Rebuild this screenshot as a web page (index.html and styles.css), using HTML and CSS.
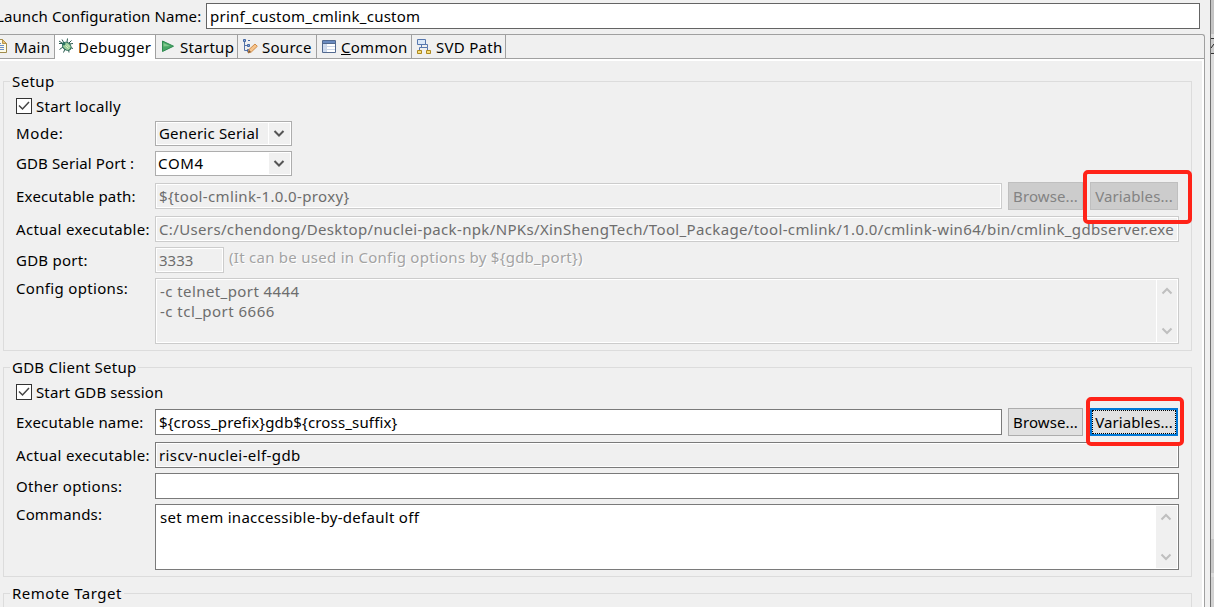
FILE: index.html
```
<!DOCTYPE html>
<html lang="en">
<head>
<meta charset="utf-8">
<title>Launch Configuration</title>
<link rel="stylesheet" href="styles.css">
</head>
<body>
<div class="screen">
  <main class="window">
    <div class="name-row">
      <span class="name-label">Launch Configuration Name:</span>
      <div class="field name-field"><span class="t-name">prinf_custom_cmlink_custom</span></div>
    </div>
    <div class="folder">
      <nav class="tabs">
        <div class="tab tab-main">
          <svg width="16" height="16" viewBox="0 0 16 16"><path d="M2.500 1.500h8l4 4v9h-12z" fill="#fdfbe8" stroke="#a08c4c"/><path d="M10.500 1.500v4h4z" fill="#e8c474" stroke="#b8954c"/><path d="M3 5.500h6M3 7.500h9M3 9.500h9M3 11.500h9" stroke="#6b8fc9"/></svg>
          <span>Main</span>
        </div>
        <div class="tab tab-debugger selected">
          <svg width="16" height="16" viewBox="0 0 16 16"><path d="M4 1.500 6 5M9.500 .5 9 4M1 5.500h4M1.500 11.500 5 9M5.500 14.500 7 11M11 14.500 10.500 11M15 10.500 11 9M15 5.500 11 6M1 3l3 2M13.500 2.500 11 5" stroke="#2b5c50" fill="none"/><ellipse cx="8.800" cy="8.300" rx="4.600" ry="3.600" transform="rotate(38 8.800 8.300)" fill="#9ccf9c" stroke="#1f6250"/><path d="M7.500 7.500l3 3M9 6.500l2.500 2.500" stroke="#dcf0c0"/><circle cx="5.800" cy="5.800" r="1.700" fill="#2d7462"/></svg>
          <span>Debugger</span>
        </div>
        <div class="tab tab-startup">
          <svg width="16" height="16" viewBox="0 0 16 16"><path d="M2.500 3v10.500L13.500 8.200z" fill="#49a866" stroke="#2f8a50" stroke-linejoin="round"/><path d="M3.500 5v3.500L10 8z" fill="#82c98d"/></svg>
          <span>Startup</span>
        </div>
        <div class="tab tab-source">
          <svg width="16" height="16" viewBox="0 0 16 16"><path d="M2.500 4v8.500h3M2.500 7.500h3" stroke="#5674a8" fill="none"/><path d="M1.500 1.500h2v2h-2zM5.500 6.500h2v2h-2zM5.500 11.500h2v2h-2zM6 2.500h2" fill="#8eabd8" stroke="#4468a5"/><path d="M6 15l1-3.500 6-5.500 2.300 2.300-6 5.700z" fill="#f6c48c" stroke="#d08c48"/><path d="M6 15l1-3 2 2z" fill="#7a583b"/></svg>
          <span>Source</span>
        </div>
        <div class="tab tab-common">
          <svg width="16" height="16" viewBox="0 0 16 16"><path d="M1.500 2.500h13v12h-13z" fill="#fff" stroke="#52698f"/><path d="M2 3h12v2H2z" fill="#6a8bc0"/><path d="M2 6h3.500v8H2z" fill="#cfdcf0"/><path d="M5.500 6v8M2 8.500h12M2 11.500h12" stroke="#cbd6e8"/><path d="M1 5.500h14" stroke="#52698f"/></svg>
          <span><u>C</u>ommon</span>
        </div>
        <div class="tab tab-svd">
          <svg width="16" height="16" viewBox="0 0 16 16"><path d="M5.500 7v2.500M3.500 12V9.500h8V12M9 6.500h2.500v3" stroke="#5878ae" fill="none"/><path d="M1.500 1.500h8v5h-8z" fill="#dbe8f8" stroke="#5878ae"/><path d="M1.500 12.500h4v3h-4zM10.500 12.500h4v3h-4z" fill="#f7df7c" stroke="#ad8820"/></svg>
          <span>SVD Path</span>
        </div>
      </nav>
      <div class="page">
        <fieldset class="group">
          <legend class="t-setup">Setup</legend>
          <div class="check-row"><span class="checkbox"><svg width="14" height="14" viewBox="0 0 14 14"><path d="M2 6.500 5.500 10 12 3"/></svg></span><span class="t-local">Start locally</span></div>
          <div class="row combo-row"><label class="t-mode">Mode:</label><div class="combo readonly"><span class="t-generic">Generic Serial</span><i class="drop"><svg width="12" height="8" viewBox="0 0 12 8"><path d="M1.500 1 6 5.500 10.500 1"/></svg></i></div></div>
          <div class="row combo-row second"><label class="t-serial">GDB Serial Port :</label><div class="combo editable"><span class="t-com">COM4</span><i class="drop"><svg width="12" height="8" viewBox="0 0 12 8"><path d="M1.500 1 6 5.500 10.500 1"/></svg></i></div></div>
          <div class="row path-row"><label class="t-epath">Executable path:</label><div class="field disabled"><span class="t-tool">${tool-cmlink-1.0.0-proxy}</span></div><div class="button browse off">Browse...</div><div class="button variables off">Variables...<b class="mark mark-top"></b></div></div>
          <div class="row actual-row"><label class="t-actual">Actual executable:</label><div class="field disabled"><span class="t-long">C:/Users/chendong/Desktop/nuclei-pack-npk/NPKs/XinShengTech/Tool_Package/tool-cmlink/1.0.0/cmlink-win64/bin/cmlink_gdbserver.exe</span></div></div>
          <div class="row next-row"><label class="t-port">GDB port:</label><div class="field disabled port"><span class="t-3333">3333</span></div><span class="hint">(It can be used in Config options by ${gdb_port})</span></div>
          <div class="row area-row"><label class="t-config">Config options:</label><div class="area disabled"><div class="lines"><span class="t-telnet">-c telnet_port 4444</span><br><span class="t-tcl">-c tcl_port 6666</span></div><div class="scroll"><svg width="12" height="8" viewBox="0 0 12 8"><path d="M1.500 6.500 6 2 10.500 6.500"/></svg><svg width="12" height="8" viewBox="0 0 12 8"><path d="M1.500 1.500 6 6 10.500 1.500"/></svg></div></div></div>
        </fieldset>
        <fieldset class="group">
          <legend class="t-client">GDB Client Setup</legend>
          <div class="check-row"><span class="checkbox"><svg width="14" height="14" viewBox="0 0 14 14"><path d="M2 6.500 5.500 10 12 3"/></svg></span><span class="t-session">Start GDB session</span></div>
          <div class="row path-row"><label class="t-ename">Executable name:</label><div class="field"><span class="t-cross">${cross_prefix}gdb${cross_suffix}</span></div><div class="button browse">Browse...</div><div class="button variables focused">Variables...<b class="mark mark-bottom"></b></div></div>
          <div class="row actual-row"><label class="t-actual">Actual executable:</label><div class="field readonly"><span class="t-riscv">riscv-nuclei-elf-gdb</span></div></div>
          <div class="row next-row"><label class="t-other">Other options:</label><div class="field"></div></div>
          <div class="row area-row"><label class="t-commands">Commands:</label><div class="area"><div class="lines"><span class="t-mem">set mem inaccessible-by-default off</span></div><div class="scroll"><svg width="12" height="8" viewBox="0 0 12 8"><path d="M1.500 6.500 6 2 10.500 6.500"/></svg><svg width="12" height="8" viewBox="0 0 12 8"><path d="M1.500 1.500 6 6 10.500 1.500"/></svg></div></div></div>
        </fieldset>
        <fieldset class="group">
          <legend class="t-remote">Remote Target</legend>
          <div class="filler"></div>
        </fieldset>
      </div>
    </div>
  </main>
  <aside class="behind"><div class="bar"></div><div class="tool"><svg width="3" height="14" viewBox="0 0 3 14"><path d="M0 9 3 5" stroke="#222"/></svg></div><div class="blank"></div><div class="bar low"></div></aside>
</div>
</body>
</html>
```
FILE: styles.css
```
* { box-sizing: border-box; }
body { margin: 0; font: 15px/20px "Noto Sans", "Open Sans", sans-serif; color: #000; background: #f0f0f0; overflow: hidden; }
.screen { display: flex; width: 1214px; height: 607px; overflow: hidden; }
.window { width: 1211px; flex: none; background: #f0f0f0; border-right: 1px solid #707070; }
.name-row { display: flex; height: 34px; padding-top: 3px; }
.name-label { flex: none; width: 210px; margin: 3px 0 0 -4px; letter-spacing: .1px; white-space: nowrap; }
.folder { width: 1205px; height: 573px; border: solid #a0a0a0; border-width: 1px 1px 0 0; border-top-right-radius: 3px; }
.tabs { display: flex; height: 24px; border-bottom: 1px solid #a0a0a0; }
.tab { display: flex; align-items: center; height: 23px; border-right: 1px solid #a0a0a0; white-space: nowrap; letter-spacing: .28px; }
.tab svg { flex: none; margin-top: -1px; }
.tab span { margin-left: 4px; }
.tab-main { width: 55px; }
.tab-main svg { margin-left: -8px; }
.tab-main span { margin-left: 6px; }
.tab-debugger { width: 101px; padding-left: 3px; }
.tab-startup { width: 82px; padding-left: 4px; }
.tab-source { width: 79px; padding-left: 4px; }
.tab-common { width: 95px; padding-left: 4px; }
.tab-svd { width: 94px; padding-left: 4px; }
.selected { background: #fff; height: 24px; padding-bottom: 1px; }
.page { height: 548px; border: solid #fff; border-width: 2px 2px 0 0; padding: 10px 0 0 3px; overflow: hidden; }
.group { margin: 0 0 6px; width: 1189px; padding: 0 0 6px 12px; border: 1px solid #dcdcdc; min-width: 0; }
legend { height: 20px; padding: 0 2px; margin-left: -6px; white-space: nowrap; }
.check-row { display: flex; align-items: center; height: 20px; margin-top: 5px; }
.checkbox { display: flex; width: 16px; height: 16px; margin-right: 4px; background: #fff; border: 1px solid #333; }
.checkbox path { fill: none; stroke: #444; stroke-width: 1.5; }
.row { display: flex; white-space: nowrap; }
.row > label { width: 139px; flex: none; padding-top: 3px; }
.combo-row { margin-top: 5px; }
.combo-row > label { padding-top: 2px; }
.path-row { margin-top: 6px; height: 28px; }
.path-row > label { padding-top: 4px; }
.path-row > .field { flex: none; width: 847px; margin-top: 1px; }
.actual-row { margin-top: 6px; }
.next-row { margin-top: 5px; }
.area-row { margin-top: 5px; }
.area-row > label { padding-top: 0; }
.field { width: 1024px; height: 26px; padding: 2px 0 0 3px; background: #fff; border: 1px solid #7a7a7a; line-height: 20px; white-space: nowrap; }
.readonly, .disabled { background: #f0f0f0; box-shadow: inset 0 0 0 1px #fff; }
.disabled { color: #6d6d6d; border-color: #ccc; }
.name-field { flex: none; width: 994px; border-color: #646464; }
.port { width: 69px; }
.hint { margin-left: 5px; color: #a3a3a3; text-shadow: 1px 1px #fff; letter-spacing: .27px; }
.combo { display: flex; width: 137px; height: 25px; padding: 1px 1px 1px 3px; background: #fff; border: 1px solid #adadad; }
.combo.readonly { background: #f0f0f0; }
.editable { padding-left: 2px; }
.drop { display: flex; align-items: center; justify-content: center; width: 22px; height: 21px; padding-right: 1px; margin-left: auto; background: #f0f0f0; border-left: 1px solid #fff; }
.drop path { fill: none; stroke: #555; stroke-width: 2; }
.button { position: relative; height: 28px; padding-top: 3px; text-align: center; background: #e1e1e1; border: 1px solid #adadad; }
.browse { width: 75px; margin-left: 6px; letter-spacing: .1px; }
.variables { width: 88px; margin-left: 7px; letter-spacing: .1px; }
.off { color: #838383; background: #ccc; border-color: #bfbfbf; }
.focused { padding-top: 2px; border: 2px solid #0078d7; outline: 1px dotted #000; outline-offset: -3px; }
.mark { position: absolute; border: 4px solid #ff2318; border-radius: 5px; }
.mark-top { left: -8px; top: -13px; width: 109px; height: 54px; }
.mark-bottom { left: -6px; top: -13px; width: 98px; height: 49px; }
.area { display: flex; justify-content: space-between; width: 1024px; height: 66px; padding: 2px 1px 1px 4px; background: #fff; border: 1px solid #7a7a7a; }
.area.disabled { background: #f0f0f0; border-color: #ccc; }
.scroll { display: flex; flex-direction: column; justify-content: space-between; align-items: center; width: 21px; height: 62px; margin-top: -1px; padding: 7px 1px 7px 0; background: #f0f0f0; }
.disabled .scroll { border-left: 1px solid #fff; }
.scroll path { fill: none; stroke: #bfbfbf; stroke-width: 2; }
.filler { height: 40px; }
.behind { width: 3px; background: #d2d2d2; }
.bar { height: 38px; background: #c4c4c4; border-bottom: 4px solid #dcdcdc; }
.tool { height: 16px; border: solid #333; border-width: 1px 0; background: #ccc; }
.tool svg { display: block; }
.blank { height: 485px; background: #dcdcdc; }
.low { background: #c8c8c8; }

/* Per-string tracking */
.t-name { letter-spacing: .23px; }
.t-setup { letter-spacing: .4px; }
.t-local { letter-spacing: .25px; }
.t-mode { letter-spacing: .6px; }
.t-generic { letter-spacing: .2px; }
.t-serial { letter-spacing: .12px; }
.t-com { letter-spacing: .7px; }
.t-epath, .t-ename { letter-spacing: .2px; }
.t-tool { letter-spacing: .35px; }
.t-actual { letter-spacing: .34px; }
.t-long { letter-spacing: .357px; }
.t-port { letter-spacing: .25px; }
.t-config { letter-spacing: .33px; }
.t-telnet { letter-spacing: .42px; }
.t-tcl { letter-spacing: .47px; }
.t-client { letter-spacing: .25px; }
.t-session { letter-spacing: .12px; }
.t-cross { letter-spacing: .16px; }
.t-riscv { letter-spacing: .4px; }
.t-other { letter-spacing: .3px; }
.t-commands { letter-spacing: .15px; }
.t-mem { letter-spacing: .29px; }
.t-remote { letter-spacing: .5px; }
```
